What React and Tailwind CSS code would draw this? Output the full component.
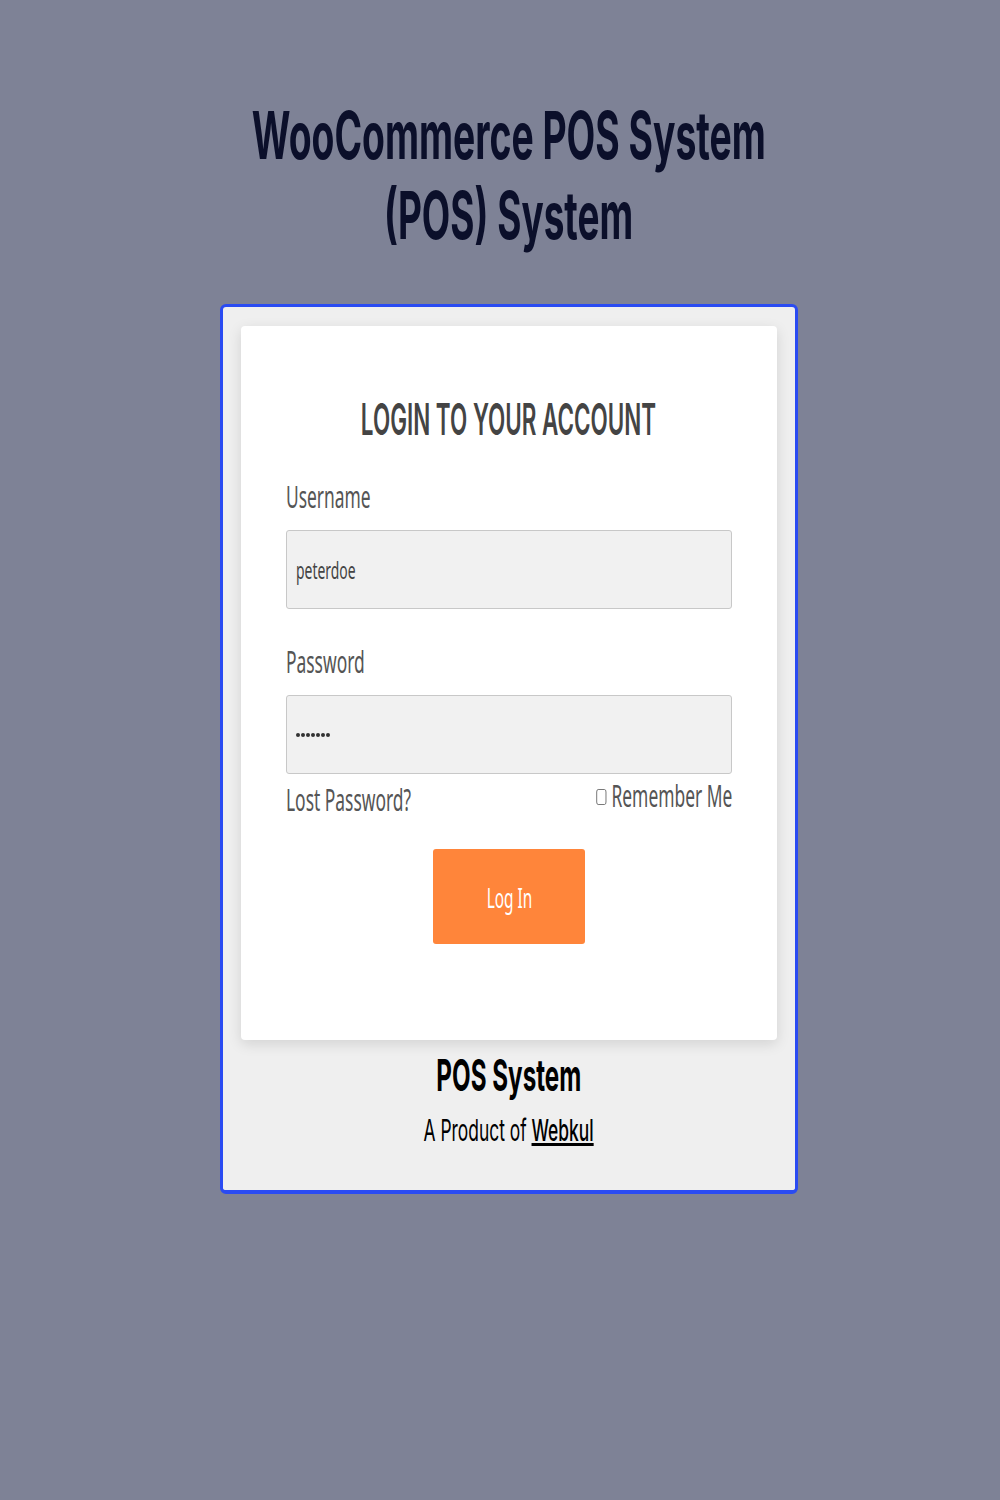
import React from 'react';

const sans = { fontFamily: '"Noto Sans", "Open Sans", sans-serif' };

function Dots() {
  return (
    <div className="flex gap-[1px]">
      {[0, 1, 2, 3, 4, 5, 6].map((i) => (
        <span key={i} className="block w-[4px] h-[4px] rounded-full bg-[#333]" />
      ))}
    </div>
  );
}

export default function App() {
  return (
    <div className="min-h-screen bg-[#7e8296] flex flex-col items-center pl-[18px] font-['Inter',sans-serif]">
      {/* Titre */}
      <h1 className="pt-[95px] flex flex-col items-center text-[66px] leading-[80px] font-bold text-[#0b0f2a]">
        <span className="inline-block scale-x-[0.565] whitespace-nowrap">WooCommerce POS System</span>
        <span className="inline-block scale-x-[0.56] whitespace-nowrap">(POS) System</span>
      </h1>

      {/* Carte */}
      <div className="mt-[49px] w-[578px] border-[3px] border-b-[4px] border-[#2a4bf2] rounded-[6px] bg-[#efefef] px-[18px] pt-[19px] pb-[42px]">
        <div className="bg-white rounded-[4px] shadow-[0_4px_14px_rgba(0,0,0,0.12)] px-[45px] pt-[71px] pb-[96px]">
          <h2 className="flex justify-center text-[44px] leading-[44px] font-semibold text-[#444]">
            <span className="inline-block shrink-0 scale-x-[0.51] whitespace-nowrap">LOGIN TO YOUR ACCOUNT</span>
          </h2>

          <div style={sans}>
            <label className="block mt-[38px] text-[30px] leading-[36px] text-[#555]">
              <span className="inline-block origin-left scale-x-[0.58]">Username</span>
            </label>
            <div className="mt-[15px] h-[79px] border border-[#c8c8c8] rounded-[3px] bg-[#f1f1f1] flex items-center px-[9px]">
              <span className="inline-block origin-left scale-x-[0.58] text-[24px] text-[#444]">peterdoe</span>
            </div>

            <label className="block mt-[35px] text-[30px] leading-[36px] text-[#555]">
              <span className="inline-block origin-left scale-x-[0.58]">Password</span>
            </label>
            <div className="mt-[15px] h-[79px] border border-[#c8c8c8] rounded-[3px] bg-[#f1f1f1] flex items-center px-[9px]">
              <Dots />
            </div>

            <div className="mt-[8px] flex justify-between items-start text-[30px] leading-[36px] text-[#555]">
              <div className="w-[130px]">
                <span className="inline-block origin-left scale-x-[0.58] whitespace-nowrap">Lost Password?</span>
              </div>
              <label className="-mt-[4px] w-[140px] flex justify-end">
                <span className="inline-block shrink-0 origin-right scale-x-[0.58] whitespace-nowrap">
                  <span className="inline-block align-middle w-[17px] h-[16px] border border-[#555] rounded-[3px] mr-[9px] -mt-[4px]" />
                  Remember Me
                </span>
              </label>
            </div>

            <div className="mt-[31px] flex justify-center">
              <button className="w-[152px] h-[95px] rounded-[3px] bg-[#ff853a] text-white text-[28px]">
                <span className="inline-block scale-x-[0.55]">Log In</span>
              </button>
            </div>
          </div>
        </div>

        <div className="text-center text-black">
          <p className="mt-[13px] text-[44px] leading-[44px] font-bold">
            <span className="inline-block scale-x-[0.55] whitespace-nowrap">POS System</span>
          </p>
          <p className="mt-[15px] text-[30px] leading-[36px]">
            <span className="inline-block scale-x-[0.58] whitespace-nowrap">
              A Product of <a href="#" className="underline font-medium">Webkul</a>
            </span>
          </p>
        </div>
      </div>
    </div>
  );
}
